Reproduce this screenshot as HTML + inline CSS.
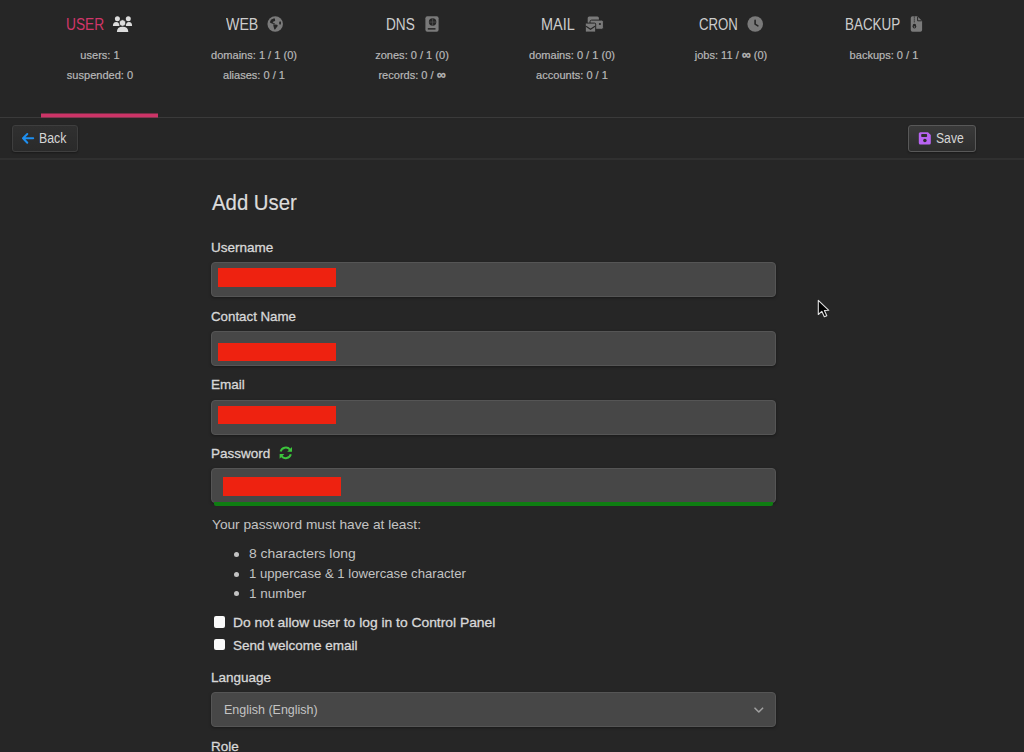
<!DOCTYPE html>
<html><head><meta charset="utf-8">
<style>
*{box-sizing:border-box;margin:0;padding:0}
html,body{width:1024px;height:752px;overflow:hidden;background:#262626;font-family:"Liberation Sans",sans-serif;color:#c8c8c8}
.a{position:absolute;white-space:nowrap}
svg{position:absolute;overflow:visible}
.tname{font-size:16px;line-height:20px;color:#cdcdcd;top:15px;transform-origin:0 0}
.st{position:absolute;width:200px;margin-left:-100px;font-size:11.5px;line-height:14px;transform:scaleX(0.96);color:#b9b9b9;-webkit-text-stroke:0.2px #b9b9b9;white-space:nowrap;text-align:center}
.hline{position:absolute;left:0;width:1024px;height:1px;background:#3a3a3a}
.btn{position:absolute;height:27px;border:1px solid #3e3e3e;border-radius:3px;background:linear-gradient(#303030,#2a2a2a);box-shadow:0 1px 2px rgba(0,0,0,.35)}
.btxt{position:absolute;font-size:14px;line-height:16px;color:#d6d6d6;white-space:nowrap;transform-origin:0 0}
.lbl{position:absolute;left:211px;font-size:13.5px;line-height:16px;color:#d8d8d8;-webkit-text-stroke:0.3px #d8d8d8;white-space:nowrap;transform-origin:0 0}
.inp{position:absolute;left:211px;width:565px;height:35px;background:#474747;border:1px solid #555;border-radius:4px;box-shadow:0 1px 3px rgba(0,0,0,.35)}
.red{position:absolute;background:#ee2210}
.txt{position:absolute;font-size:13.5px;line-height:16px;color:#c3c3c3;white-space:nowrap;transform-origin:0 0}
.dot{position:absolute;left:233.5px;width:5px;height:5px;border-radius:50%;background:#c3c3c3}
.cb{position:absolute;left:213.8px;width:11.5px;height:11.5px;border-radius:2px;background:#fafafa}
.cbl{position:absolute;left:233px;font-size:13.5px;line-height:16px;color:#d8d8d8;-webkit-text-stroke:0.3px #d8d8d8;white-space:nowrap;transform-origin:0 0}
</style></head><body>

<!-- header tabs -->
<div class="a tname" style="left:66px;color:#d03669;transform:scaleX(0.860)">USER</div>
<svg style="left:112px;top:15px" width="21" height="18" viewBox="0 0 21 18">
  <g fill="#dcdcdc">
  <circle cx="5.4" cy="3.8" r="2.5"/><circle cx="16.3" cy="3.8" r="2.5"/>
  <path d="M0.9,11 Q0.9,6.9 4.2,6.9 Q7.5,6.9 7.5,11 Z"/>
  <path d="M13.9,11 Q13.9,6.9 17,6.9 Q20.1,6.9 20.1,11 Z"/>
  <circle cx="10.5" cy="8" r="3.3" stroke="#262626" stroke-width="0.8"/>
  <path d="M4.9,17 Q4.9,11.7 10.6,11.7 Q16.3,11.7 16.3,17 Z"/>
  </g>
</svg>
<div class="st" style="left:99.5px;top:47.5px">users: 1</div>
<div class="st" style="left:99.5px;top:67.5px">suspended: 0</div>

<div class="a tname" style="left:225.5px;transform:scaleX(0.886)">WEB</div>
<svg style="left:267px;top:16px" width="16" height="16" viewBox="0 0 16 16">
  <circle cx="8.2" cy="8.05" r="7.75" fill="#7a7a7a"/>
  <g fill="#262626">
  <path d="M2.86,6.21 L3.98,3.66 L6.53,2.38 L7.97,2.54 L8.13,4.94 L6.53,5.58 L5.58,6.53 L7.49,7.17 L8.13,7.97 L5.58,7.81 L3.66,7.01 Z"/>
  <path d="M6.21,8.29 L10.04,8.77 L10.84,9.72 L8.13,13.4 L7.33,13.4 L6.53,10.36 Z"/>
  <ellipse cx="13.08" cy="7.01" rx="0.96" ry="1.76"/>
  </g>
</svg>
<div class="st" style="left:254.2px;top:47.5px">domains: 1 / 1 (0)</div>
<div class="st" style="left:254.2px;top:67.5px">aliases: 0 / 1</div>

<div class="a tname" style="left:386.3px;transform:scaleX(0.852)">DNS</div>
<svg style="left:424.5px;top:16px" width="14" height="16" viewBox="0 0 14 16">
  <rect x="0.4" y="0.3" width="13.2" height="15.5" rx="2" fill="#7a7a7a"/>
  <circle cx="7.6" cy="6.05" r="3.7" fill="#262626"/>
  <path d="M3.9,6.05 H11.3 M7.6,2.4 V9.7" stroke="#555" stroke-width="0.7"/>
  <rect x="2.8" y="12.1" width="7.7" height="1.5" fill="#262626"/>
</svg>
<div class="st" style="left:412.4px;top:47.5px">zones: 0 / 1 (0)</div>
<div class="st" style="left:412.4px;top:67.5px">records: 0 / <b style="font-size:13px;-webkit-text-stroke:0.3px">∞</b></div>

<div class="a tname" style="left:541px;transform:scaleX(0.903)">MAIL</div>
<svg style="left:585px;top:16px" width="19" height="16" viewBox="0 0 19 16">
  <rect x="2.7" y="0.5" width="11.2" height="8" rx="1.5" fill="#7a7a7a"/>
  <rect x="5" y="4.1" width="13.4" height="9.2" rx="1.6" fill="#7a7a7a" stroke="#262626" stroke-width="1"/>
  <circle cx="14.9" cy="8" r="1.1" fill="#262626"/>
  <rect x="0.3" y="7.1" width="10.4" height="9" rx="1" fill="#7a7a7a" stroke="#262626" stroke-width="1"/>
  <path d="M1,10.3 L5.5,13.3 L10,10.3" fill="none" stroke="#262626" stroke-width="1.1"/>
</svg>
<div class="st" style="left:572.2px;top:47.5px">domains: 0 / 1 (0)</div>
<div class="st" style="left:572.2px;top:67.5px">accounts: 0 / 1</div>

<div class="a tname" style="left:699.4px;transform:scaleX(0.826)">CRON</div>
<svg style="left:747px;top:16px" width="16" height="16" viewBox="0 0 16 16">
  <circle cx="8.2" cy="8.05" r="7.8" fill="#7a7a7a"/>
  <path d="M8.1,4.4 L8.1,8.1 L10.9,9.9" fill="none" stroke="#262626" stroke-width="1.6" stroke-linecap="round" stroke-linejoin="round"/>
</svg>
<div class="st" style="left:731.2px;top:47.5px">jobs: 11 / <b style="font-size:13px;-webkit-text-stroke:0.3px">∞</b> (0)</div>

<div class="a tname" style="left:845px;transform:scaleX(0.839)">BACKUP</div>
<svg style="left:910px;top:16px" width="13" height="16" viewBox="0 0 13 16">
  <path d="M2.5,0.3 H7.4 L12.1,5 V14 Q12.1,15.8 10.3,15.8 H2.5 Q0.75,15.8 0.75,14 V2.1 Q0.75,0.3 2.5,0.3 Z" fill="#7a7a7a"/>
  <path d="M7.6,0.6 V4.8 H11.8" fill="none" stroke="#262626" stroke-width="1"/>
  <path d="M4.3,0.5 V6.8" stroke="#262626" stroke-width="1" stroke-dasharray="1.2 0.8"/>
  <ellipse cx="4.4" cy="10.2" rx="1.8" ry="2.4" fill="#262626"/>
  <circle cx="4.4" cy="10.9" r="0.7" fill="#7a7a7a"/>
</svg>
<div class="st" style="left:883.7px;top:47.5px">backups: 0 / 1</div>

<div class="hline" style="top:117px"></div>
<div class="a" style="left:41px;top:113px;width:117px;height:4px;background:#cc3467;transform:translateY(0.5px)"></div>
<div class="hline" style="top:158px;transform:translateY(0.5px)"></div>

<!-- toolbar -->
<div class="btn" style="left:12px;top:125px;width:66px"></div>
<svg style="left:21px;top:132px" width="15" height="13" viewBox="0 0 15 13">
  <path d="M2,6.2 L6.3,2 M2,6.2 L6.3,10.7 M2,6.2 L12.2,6.2" fill="none" stroke="#1e8ff0" stroke-width="2" stroke-linecap="round" stroke-linejoin="round"/>
</svg>
<div class="btxt" style="left:38.5px;top:130px;transform:scaleX(0.88)">Back</div>

<div class="btn" style="left:908px;top:124.5px;width:67.5px;height:27.5px;border:1.5px solid #585858;background:linear-gradient(#3a3a3a,#2d2d2d)"></div>
<svg style="left:918px;top:131px" width="14" height="15" viewBox="0 0 14 15">
  <path d="M2.3,1.2 H10 L12.8,4 V11.9 Q12.8,13.4 11.3,13.4 H2.3 Q0.8,13.4 0.8,11.9 V2.7 Q0.8,1.2 2.3,1.2 Z" fill="#b964f2"/>
  <rect x="3.2" y="3.1" width="5.9" height="2.9" rx="0.8" fill="#2e2e2e"/>
  <circle cx="6.9" cy="9.5" r="1.75" fill="#2e2e2e"/>
</svg>
<div class="btxt" style="left:935.5px;top:130px;transform:scaleX(0.87)">Save</div>

<!-- form -->
<div class="a" style="left:211.8px;top:190px;font-size:22px;line-height:26px;color:#dcdcdc;-webkit-text-stroke:0.2px #dcdcdc;transform:scaleX(0.925);transform-origin:0 0">Add User</div>

<div class="lbl" style="top:240px">Username</div>
<div class="inp" style="top:262px"></div>
<div class="red" style="left:218px;top:268px;width:118px;height:19px"></div>

<div class="lbl" style="top:309px;transform:scaleX(0.985)">Contact Name</div>
<div class="inp" style="top:331px"></div>
<div class="red" style="left:218px;top:343px;width:118px;height:18px"></div>

<div class="lbl" style="top:377px">Email</div>
<div class="inp" style="top:400px"></div>
<div class="red" style="left:218px;top:406px;width:118px;height:18px"></div>

<div class="lbl" style="top:446px;">Password</div>
<svg style="left:278px;top:446px" width="16" height="14" viewBox="0 0 16 14">
  <g fill="none" stroke="#3cc43c" stroke-width="2">
  <path d="M2.6,5.6 A5.4,5.4 0 0 1 12,3.6"/>
  <path d="M12.8,8.2 A5.4,5.4 0 0 1 3.4,10.2"/>
  </g>
  <g fill="#3cc43c">
  <path d="M14,1 L14,5.8 L9.2,5.8 Z"/>
  <path d="M1.6,12.8 L1.6,8 L6.4,8 Z"/>
  </g>
</svg>
<div class="inp" style="top:468px;height:35px"></div>
<div class="a" style="left:214px;top:502px;width:559px;height:3.5px;background:#0f7d12;border-radius:0 0 2px 2px"></div>
<div class="red" style="left:222.5px;top:477px;width:118px;height:19px"></div>

<div class="txt" style="left:212px;top:517px;transform:scaleX(1.015)">Your password must have at least:</div>
<div class="dot" style="top:551.5px"></div>
<div class="txt" style="left:249px;top:546px;transform:scaleX(1.03)">8 characters long</div>
<div class="dot" style="top:571.5px"></div>
<div class="txt" style="left:249px;top:566px;transform:scaleX(0.973)">1 uppercase &amp; 1 lowercase character</div>
<div class="dot" style="top:591px"></div>
<div class="txt" style="left:249px;top:586px">1 number</div>

<div class="cb" style="top:616px"></div>
<div class="cbl" style="top:615px;transform:scaleX(1.025)">Do not allow user to log in to Control Panel</div>
<div class="cb" style="top:638.5px"></div>
<div class="cbl" style="top:638px">Send welcome email</div>

<div class="lbl" style="top:670px;">Language</div>
<div class="inp" style="top:692px;height:35px"></div>
<div class="txt" style="left:223.5px;top:702px;color:#c4c4c4;transform:scaleX(0.925)">English (English)</div>
<svg style="left:754px;top:707px" width="10" height="7" viewBox="0 0 10 7">
  <path d="M1,1.2 L4.8,5 L8.6,1.2" fill="none" stroke="#a0a0a0" stroke-width="1.6" stroke-linecap="round" stroke-linejoin="round"/>
</svg>

<div class="lbl" style="top:739px">Role</div>

<!-- cursor -->
<svg style="left:817px;top:299px" width="14" height="20" viewBox="0 0 14 20">
  <path d="M1.3,1.4 L1.3,15.5 L4.8,12.3 L7.3,17.8 L9.8,16.8 L7.4,11.5 L11.8,11.3 Z" fill="#000" stroke="#e0e0e0" stroke-width="1.1" stroke-linejoin="round"/>
</svg>

</body></html>
